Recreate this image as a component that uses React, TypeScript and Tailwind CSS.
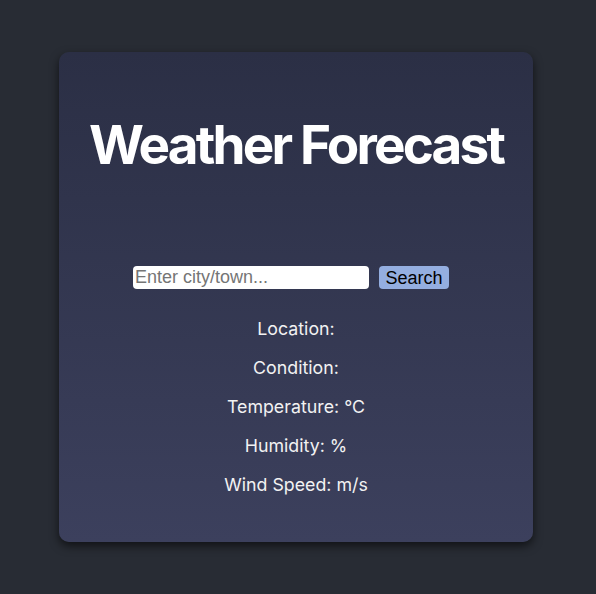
export default function App() {
  const rows = ["Location:", "Condition:", "Temperature: °C", "Humidity: %", "Wind Speed: m/s"];
  return (
    <div className="min-h-[594px] w-full bg-[#282c34] pt-[52px]">
      <div className="ml-[59px] flex h-[490px] w-[474px] flex-col items-center rounded-[10px] bg-gradient-to-b from-[#2b2f45] to-[#3c405d] pt-[67px] shadow-[0_4px_10px_rgba(0,0,0,0.6)]">
        <h1 className="font-['Inter',sans-serif] text-[53px] font-bold leading-none tracking-[-0.053em] text-white">
          Weather Forecast
        </h1>
        <div className="mr-[10px] mt-[94px] flex items-center gap-[10px]">
          <input
            type="text"
            placeholder="Enter city/town..."
            className="h-[23px] w-[236px] rounded-[4px] bg-white px-[2px] font-['Liberation_Sans',Arial,sans-serif] text-[18px] text-black placeholder:text-[#757575] focus:outline-none"
          />
          <button className="h-[23px] w-[70px] rounded-[4px] bg-[#94aee0] font-['Liberation_Sans',Arial,sans-serif] text-[18px] leading-none text-black">
            Search
          </button>
        </div>
        <div className="mt-[28px] flex flex-col items-center gap-[15px] font-['Inter',sans-serif] text-[17.8px] leading-[24px] text-[#f2f2f2]">
          {rows.map((r) => (
            <p key={r}>{r}</p>
          ))}
        </div>
      </div>
    </div>
  );
}
